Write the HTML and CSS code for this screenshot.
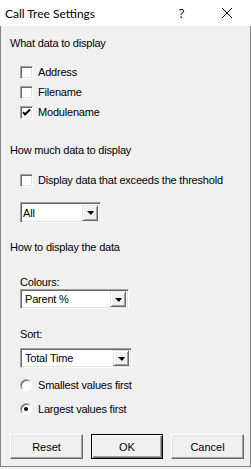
FILE: index.html
```html
<!DOCTYPE html>
<html lang="en">
<head>
  <meta charset="UTF-8">
  <meta name="viewport" content="width=device-width, initial-scale=1.0">
  <title>Call Tree Settings</title>
  <link rel="stylesheet" href="styles.css">
</head>
<body>
  <div class="dialog">
    <div class="titlebar">
      <span class="title">Call Tree Settings</span>
      <span class="help">?</span>
      <span class="close">
        <svg width="12" height="12" viewBox="0 0 12 12"><path d="M1 1 L11 11 M11 1 L1 11" stroke="#000" stroke-width="1" fill="none"/></svg>
      </span>
    </div>

    <div class="content">
      <div class="heading first">What data to display</div>
      <div class="options">
        <div class="row"><span class="box"></span>Address</div>
        <div class="row"><span class="box"></span>Filename</div>
        <div class="row"><span class="box checked"><svg width="9" height="9" viewBox="0 0 9 9"><path d="M1 4 L3 6.5 L8 1.5" stroke="#000" stroke-width="2" fill="none"/></svg></span>Modulename</div>
      </div>

      <div class="heading second">How much data to display</div>
      <div class="row threshold"><span class="box"></span>Display data that exceeds the threshold</div>
      <div class="combo combo-all"><span class="value">All</span><span class="arrow"></span></div>

      <div class="heading third">How to display the data</div>
      <div class="label">Colours:</div>
      <div class="combo combo-colours"><span class="value">Parent %</span><span class="arrow"></span></div>
      <div class="label sort">Sort:</div>
      <div class="combo combo-sort"><span class="value">Total Time</span><span class="arrow"></span></div>
      <div class="row radio-row smallest"><span class="radio"></span>Smallest values first</div>
      <div class="row radio-row largest"><span class="radio on"></span>Largest values first</div>

      <div class="buttons">
        <button class="btn">Reset</button>
        <button class="btn default">OK</button>
        <button class="btn">Cancel</button>
      </div>
    </div>
  </div>
</body>
</html>
```

FILE: styles.css
```css
body {
  margin: 0;
  background-color: #f0f0f0;
  font-family: "Liberation Sans", Arial, sans-serif;
  font-size: 11px;
  color: #000;
}
.dialog {
  width: 251px;
  height: 467px;
  box-sizing: border-box;
  border: 1px solid #858585;
  border-top: none;
  background-color: #f0f0f0;
  display: flex;
  flex-direction: column;
}
.titlebar {
  height: 26px;
  background-color: #fff;
  display: flex;
  align-items: center;
  margin: 0 -1px 0 -1px;
}
.title {
  font-family: Lato, "Noto Sans", sans-serif;
  font-size: 12px;
  padding-left: 5px;
  flex: 1;
}
.help {
  font-family: "Noto Sans", sans-serif;
  font-size: 12px;
  width: 10px;
  margin-right: 32px;
}
.close {
  display: flex;
  margin-right: 18px;
}
.content {
  padding-left: 9px;
  display: flex;
  flex-direction: column;
  align-items: flex-start;
  letter-spacing: -0.2px;
}
.heading {
  line-height: 20px;
}
.first { margin-top: 7px; }
.second { margin-top: 18px; }
.third { margin-top: 14px; }
.options {
  margin-top: 9px;
}
.row {
  height: 20px;
  display: flex;
  align-items: center;
  padding-left: 10px;
}
.threshold {
  margin-top: 10px;
}
.box {
  width: 13px;
  height: 13px;
  box-sizing: border-box;
  background-color: #fff;
  border: 1px solid;
  border-color: #a0a0a0 #fff #fff #a0a0a0;
  box-shadow: inset 1px 1px #696969, inset -1px -1px #e3e3e3;
  margin-right: 5px;
  display: flex;
  align-items: center;
  justify-content: center;
}
.radio {
  width: 12px;
  height: 12px;
  box-sizing: border-box;
  border-radius: 50%;
  background-color: #fff;
  border: 1px solid;
  border-color: #a0a0a0 #fff #fff #a0a0a0;
  box-shadow: inset 1px 1px #696969;
  margin-right: 6px;
  display: flex;
  align-items: center;
  justify-content: center;
}
.radio.on::after {
  content: "";
  width: 4px;
  height: 4px;
  border-radius: 50%;
  background-color: #000;
}
.smallest { margin-top: 7px; }
.largest { margin-top: 4px; }
.combo {
  height: 20px;
  box-sizing: border-box;
  background-color: #fff;
  border: 1px solid;
  border-color: #a0a0a0 #fff #fff #a0a0a0;
  box-shadow: inset 1px 1px #696969, inset -1px -1px #e3e3e3;
  display: flex;
  align-items: center;
  padding: 0 2px 0 3px;
  margin-left: 10px;
}
.combo .value {
  flex: 1;
}
.combo-all {
  width: 81px;
  height: 21px;
  margin-top: 12px;
  padding-left: 2px;
}
.combo-colours {
  width: 109px;
}
.combo-sort {
  width: 112px;
  margin-top: 7px;
}
.combo-colours .value,
.combo-sort .value {
  padding-left: 1px;
}
.arrow {
  width: 16px;
  height: 16px;
  box-sizing: border-box;
  background-color: #f0f0f0;
  border: 1px solid;
  border-color: #e3e3e3 #696969 #696969 #e3e3e3;
  box-shadow: inset 1px 1px #fff, inset -1px -1px #a0a0a0;
  display: flex;
  align-items: center;
  justify-content: center;
}
.arrow::after {
  content: "";
  border-left: 4px solid transparent;
  border-right: 3px solid transparent;
  border-top: 4px solid #000;
  margin-top: 1px;
}
.label {
  line-height: 13px;
  margin-top: 19px;
  margin-left: 10px;
}
.label.sort {
  margin-top: 19px;
}
.buttons {
  margin-top: 15px;
  display: flex;
  gap: 8px;
}
.btn {
  width: 73px;
  height: 25px;
  box-sizing: border-box;
  font-family: "Liberation Sans", Arial, sans-serif;
  font-size: 11px;
  color: #000;
  background-color: #f0f0f0;
  border: 1px solid;
  border-color: #fff #696969 #696969 #fff;
  box-shadow: inset -1px -1px #a0a0a0, inset 1px 1px #e3e3e3;
  padding: 0;
}
.btn.default {
  border: 1px solid #000;
  box-shadow: inset 1px 1px #fff, inset -1px -1px #696969, inset -2px -2px #a0a0a0;
  width: 72px;
}
```
